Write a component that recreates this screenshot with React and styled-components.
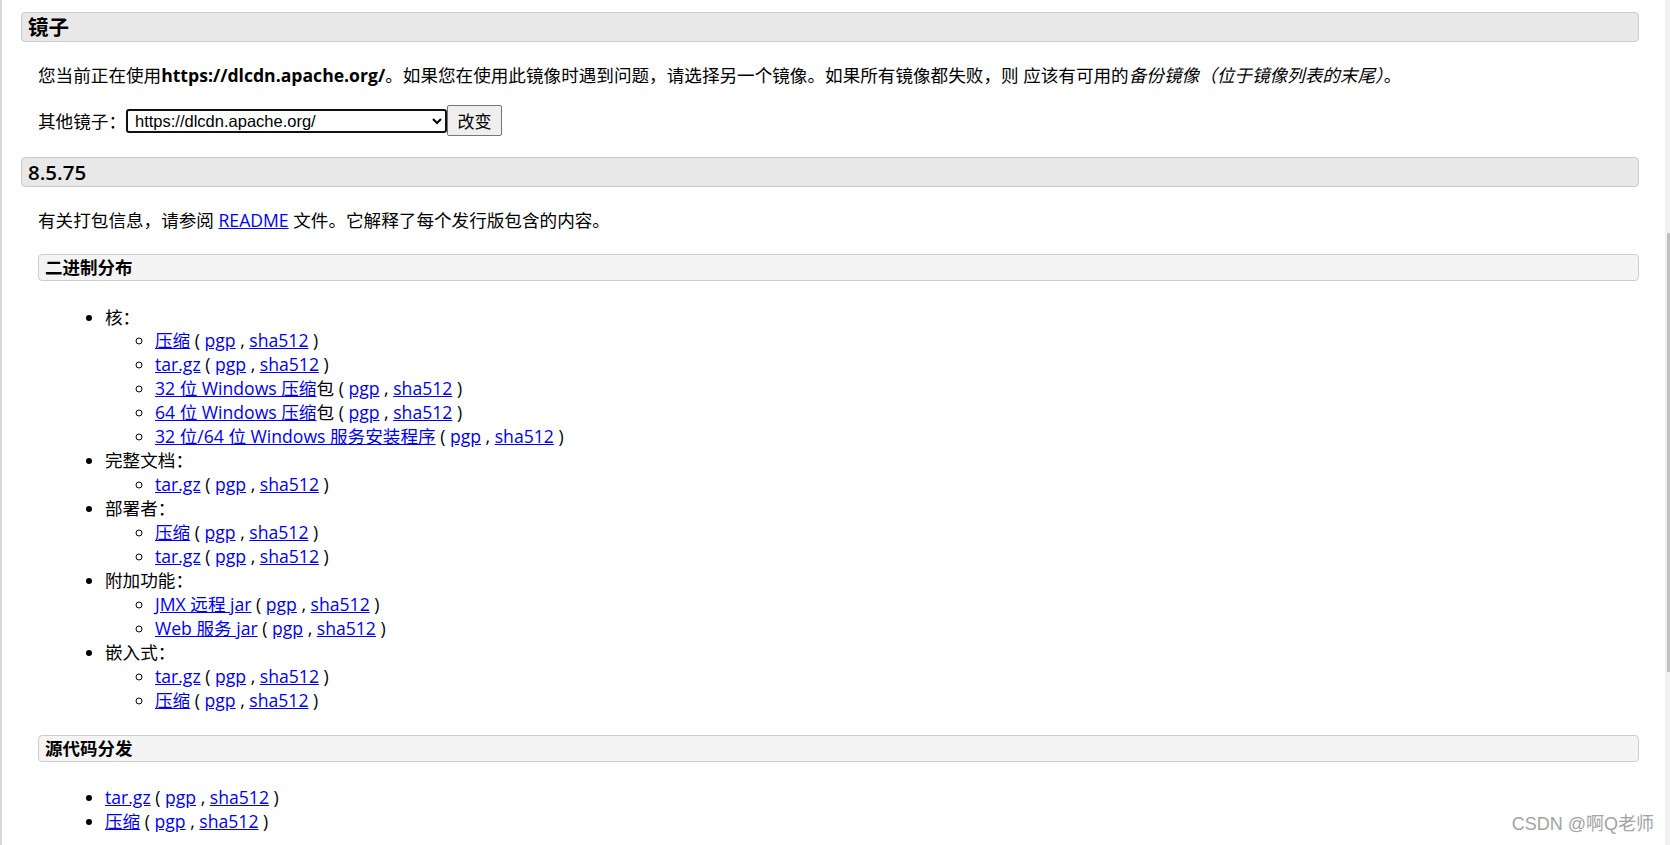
import React from 'react';
import styled, { createGlobalStyle } from 'styled-components';

const FONT = `"Open Sans", "Noto Sans CJK SC", sans-serif`;

const GlobalStyle = createGlobalStyle`
  html, body { margin: 0; padding: 0; background: #fff; }
  body { overflow: hidden; }
`;

const Page = styled.div`
  position: relative;
  display: flex;
  width: 1670px;
  height: 845px;
  overflow: hidden;
  background: #fff;
  font-family: ${FONT};
  color: #000;
`;

const EdgeLine = styled.div`
  flex: none;
  width: 1px;
  border-left: 2px solid #dcd9d4;
`;

const Content = styled.main`
  flex: 1;
  min-width: 0;
  padding: 12px 26px 0 18px;
`;

const ScrollTrack = styled.div`
  flex: none;
  width: 5px;
  background: #f1f1f1;
  display: flex;
  justify-content: flex-end;
`;

const ScrollThumb = styled.div`
  width: 3.5px;
  height: 439px;
  margin-top: 233px;
  background: #c1c1c1;
`;

const H3 = styled.h3`
  margin: ${p => (p.$first ? '0' : '21px')} 0 0;
  background: #e8e8e8;
  border: 1px solid #ccc;
  border-radius: 4px;
  padding: 0 6px;
  font-size: 20.5px;
  line-height: 28px;
  font-weight: ${p => p.$weight || 700};
`;

const Section = styled.section`
  padding-left: 17px;
`;

const Para = styled.p`
  margin: 20.5px 0 0;
  font-size: 17.6px;
  line-height: 24px;
`;

const Strong = styled.b`
  font-weight: 700;
`;

const Em = styled.i`
  font-style: italic;
`;

const MirrorRow = styled.div`
  display: flex;
  align-items: center;
  height: 31px;
  margin-top: 18.5px;
  font-size: 17.6px;
  line-height: 24px;
`;

const MirrorSelect = styled.select`
  width: 321px;
  height: 24px;
  box-sizing: border-box;
  border: 2px solid #111;
  border-radius: 3px;
  padding: 0 0 0 3px;
  background: #fff;
  color: #000;
  font-family: "Liberation Sans", Arial, sans-serif;
  font-size: 16.5px;
`;

const ChangeButton = styled.button`
  width: 55px;
  height: 31px;
  box-sizing: border-box;
  padding: 0;
  background: #efefef;
  border: 1px solid #767676;
  border-radius: 2px;
  color: #000;
  font-family: "Noto Sans CJK SC", sans-serif;
  font-size: 17px;
`;

const H4 = styled.h4`
  margin: 22.5px 0 0;
  background: #f4f4f4;
  border: 1px solid #ccc;
  border-radius: 4px;
  padding: 0 6px;
  font-size: 17.5px;
  line-height: 24.5px;
  font-weight: 700;
`;

const List = styled.ul`
  margin: ${p => p.$top || '25px'} 0 0;
  padding-left: 67px;
  list-style: disc;
  font-size: 17.6px;
  line-height: 23.95px;
`;

const SubList = styled.ul`
  margin: 0;
  padding-left: 50px;
  list-style: circle;
`;

const Link = styled.a`
  color: #0000ee;
  text-decoration: underline;
`;

const Watermark = styled.div`
  position: absolute;
  right: 16px;
  bottom: 10px;
  font-family: "Liberation Sans", "Noto Sans CJK SC", sans-serif;
  font-size: 18px;
  line-height: 22px;
  color: #a3a3a3;
`;

const binary = [
  {
    label: '核：',
    items: [
      { link: '压缩' },
      { link: 'tar.gz' },
      { link: '32 位 Windows 压缩', tail: '包' },
      { link: '64 位 Windows 压缩', tail: '包' },
      { link: '32 位/64 位 Windows 服务安装程序' },
    ],
  },
  { label: '完整文档：', items: [{ link: 'tar.gz' }] },
  { label: '部署者：', items: [{ link: '压缩' }, { link: 'tar.gz' }] },
  { label: '附加功能：', items: [{ link: 'JMX 远程 jar' }, { link: 'Web 服务 jar' }] },
  { label: '嵌入式：', items: [{ link: 'tar.gz' }, { link: '压缩' }] },
];

const source = [{ link: 'tar.gz' }, { link: '压缩' }];

function Download({ link, tail }) {
  return (
    <>
      <Link href="#">{link}</Link>
      {tail} ( <Link href="#">pgp</Link> , <Link href="#">sha512</Link> )
    </>
  );
}

export default function App() {
  return (
    <Page>
      <GlobalStyle />
      <EdgeLine />
      <Content>
        <H3 $first>镜子</H3>
        <Section>
          <Para>
            您当前正在使用<Strong>https://dlcdn.apache.org/</Strong>。如果您在使用此镜像时遇到问题，请选择另一个镜像。如果所有镜像都失败，则 应该有可用的
            <Em>备份镜像</Em>
            <Em>（位于镜像列表的末尾）</Em>。
          </Para>
          <MirrorRow>
            <span>其他镜子：</span>
            <MirrorSelect defaultValue="https://dlcdn.apache.org/">
              <option value="https://dlcdn.apache.org/">https://dlcdn.apache.org/</option>
            </MirrorSelect>
            <ChangeButton type="button">改变</ChangeButton>
          </MirrorRow>
        </Section>

        <H3 $weight={600}>8.5.75</H3>
        <Section>
          <Para>
            有关打包信息，请参阅 <Link href="#">README</Link> 文件。它解释了每个发行版包含的内容。
          </Para>

          <H4>二进制分布</H4>
          <List>
            {binary.map(group => (
              <li key={group.label}>
                {group.label}
                <SubList>
                  {group.items.map((item, i) => (
                    <li key={i}>
                      <Download {...item} />
                    </li>
                  ))}
                </SubList>
              </li>
            ))}
          </List>

          <H4>源代码分发</H4>
          <List $top="24.5px">
            {source.map((item, i) => (
              <li key={i}>
                <Download {...item} />
              </li>
            ))}
          </List>
        </Section>
      </Content>
      <ScrollTrack>
        <ScrollThumb />
      </ScrollTrack>
      <Watermark>CSDN @啊Q老师</Watermark>
    </Page>
  );
}
